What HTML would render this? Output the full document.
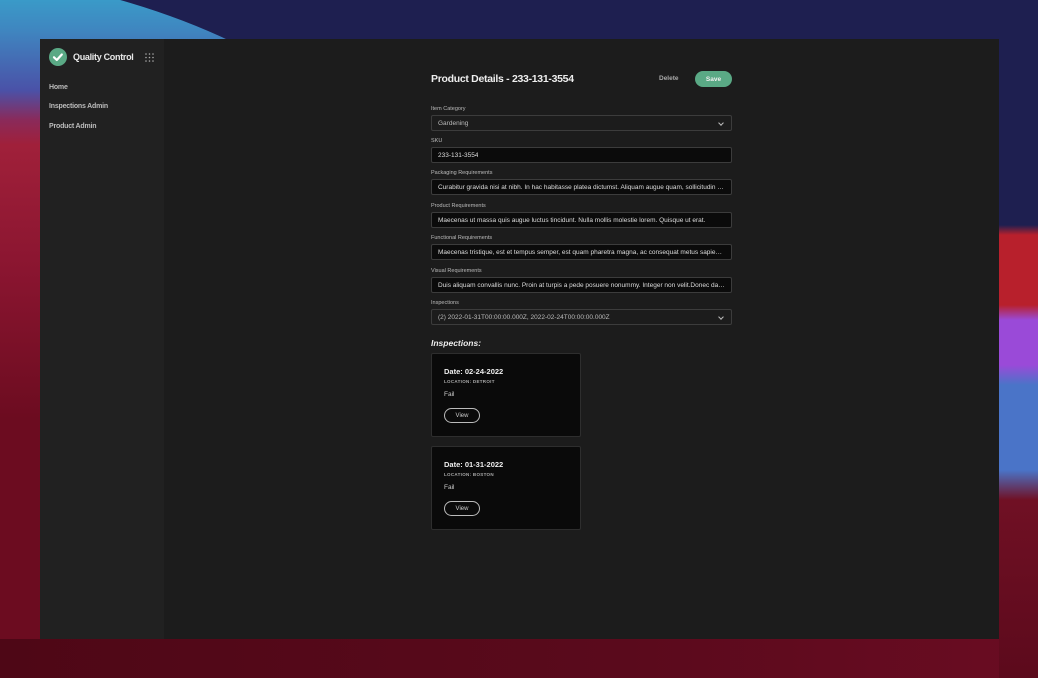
<!DOCTYPE html>
<html><head><meta charset="utf-8"><style>
*{box-sizing:border-box;margin:0;padding:0}
html,body{width:1038px;height:678px;overflow:hidden}
body{position:relative;font-family:"Liberation Sans",sans-serif;background:#1e1f50;}
.bg{position:absolute;inset:0;overflow:hidden}
.bg div{position:absolute}
.win{position:absolute;left:40px;top:39px;width:959px;height:600px;background:#1c1c1c}
.side{position:absolute;left:0;top:0;width:124px;height:600px;background:#212121}
.logo{position:absolute;left:9px;top:9px;width:18px;height:18px;border-radius:50%;background:#5aa985}
.brand{position:absolute;left:33px;top:13px;color:#e8e8e8;font-size:9px;font-weight:bold;letter-spacing:-.3px}
.nav{position:absolute;left:9px;color:#bbb;font-size:7px;font-weight:bold;letter-spacing:-.2px}
.main{position:absolute;left:391px;top:0;width:301px}
h1{position:absolute;top:34px;left:0;color:#eee;font-size:10.5px;font-weight:bold;letter-spacing:-.3px}
.del{position:absolute;left:228px;top:36px;color:#aaa;font-size:6.5px;font-weight:bold}
.save{position:absolute;left:264px;top:32px;width:37px;height:16px;border-radius:8px;background:#5aa985;color:#f0f0f0;font-size:6.5px;font-weight:bold;display:flex;align-items:center;justify-content:center}
.lbl{position:absolute;left:0;color:#bbb;font-size:5.5px}
.inp{position:absolute;left:0;width:301px;height:16px;border:1px solid #3c3c3c;border-radius:2px;background:#0b0b0b;color:#ddd;font-size:6.5px;padding:0 6px;white-space:nowrap;overflow:hidden;display:flex;align-items:center}
.inp span{overflow:hidden;text-overflow:ellipsis;white-space:nowrap}
.sel{background:#1c1c1c;color:#bbb}
.sel:after{content:"";position:absolute;right:8px;top:5px;width:3px;height:3px;border-right:1px solid #bbb;border-bottom:1px solid #bbb;transform:rotate(45deg)}
.ih{position:absolute;left:0;top:299px;color:#eee;font-size:8.5px;font-weight:bold;font-style:italic}
.card{position:absolute;left:0;width:150px;height:84px;background:#0a0a0a;border:1px solid #2e2e2e;border-radius:2px}
.card .d{position:absolute;left:12px;top:13px;color:#eee;font-size:7.5px;font-weight:bold}
.card .l{position:absolute;left:12px;top:25px;color:#aaa;font-size:4.5px;font-weight:bold;letter-spacing:.3px}
.card .f{position:absolute;left:12px;top:37px;color:#ccc;font-size:6.5px}
.card .v{position:absolute;left:12px;top:54px;width:36px;height:15px;border:1px solid #bbb;border-radius:8px;color:#ccc;font-size:6px;display:flex;align-items:center;justify-content:center}
</style></head><body>
<div class="bg">
<div style="left:-700px;top:-30px;width:1200px;height:860px;border-radius:50%;background:linear-gradient(180deg,#3a9ac8 30px,#3f86c0 60px,#4a52a8 120px,#8a2a5a 150px,#a0203a 175px,#8a1530 300px,#6c0c20 450px)"></div>
<div style="left:0;top:639px;width:1038px;height:40px;background:linear-gradient(90deg,#4e0716,#5a0a1c 60%,#6a0c22)"></div>
<div style="left:999px;top:0;width:39px;height:678px;background:linear-gradient(180deg,#1e1f50 0,#1e1f50 225px,#b8202c 235px,#b8202c 305px,#9a4ad8 320px,#9a4ad8 365px,#4a74c8 385px,#4a74c8 470px,#701024 500px,#5c0a1c 678px)"></div>
</div>
<div class="win">
<div class="side">
<div class="logo"><svg width="18" height="18" viewBox="0 0 18 18"><path d="M5 9.3l2.8 2.7 5-5.5" stroke="#fff" stroke-width="2.2" fill="none" stroke-linecap="round" stroke-linejoin="round"/></svg></div>
<div class="brand">Quality Control</div>
<svg style="position:absolute;left:105px;top:14px" width="9" height="9"><g fill="#aaa"><circle cx="1" cy="1" r=".8"/><circle cx="4.5" cy="1" r=".8"/><circle cx="8" cy="1" r=".8"/><circle cx="1" cy="4.5" r=".8"/><circle cx="4.5" cy="4.5" r=".8"/><circle cx="8" cy="4.5" r=".8"/><circle cx="1" cy="8" r=".8"/><circle cx="4.5" cy="8" r=".8"/><circle cx="8" cy="8" r=".8"/></g></svg>
<div class="nav" style="top:45px">Home</div>
<div class="nav" style="top:64px">Inspections Admin</div>
<div class="nav" style="top:84px">Product Admin</div>
</div>
<div class="main">
<h1>Product Details - 233-131-3554</h1>
<div class="del">Delete</div>
<div class="save">Save</div>
<div class="lbl" style="top:67px">Item Category</div>
<div class="inp sel" style="top:76px"><span>Gardening</span></div>
<div class="lbl" style="top:99px">SKU</div>
<div class="inp" style="top:108px"><span>233-131-3554</span></div>
<div class="lbl" style="top:131px">Packaging Requirements</div>
<div class="inp" style="top:140px"><span>Curabitur gravida nisi at nibh. In hac habitasse platea dictumst. Aliquam augue quam, sollicitudin vitae</span></div>
<div class="lbl" style="top:164px">Product Requirements</div>
<div class="inp" style="top:173px"><span>Maecenas ut massa quis augue luctus tincidunt. Nulla mollis molestie lorem. Quisque ut erat.</span></div>
<div class="lbl" style="top:196px">Functional Requirements</div>
<div class="inp" style="top:205px"><span>Maecenas tristique, est et tempus semper, est quam pharetra magna, ac consequat metus sapien ut nunc</span></div>
<div class="lbl" style="top:229px">Visual Requirements</div>
<div class="inp" style="top:238px"><span>Duis aliquam convallis nunc. Proin at turpis a pede posuere nonummy. Integer non velit.Donec dapibus</span></div>
<div class="lbl" style="top:261px">Inspections</div>
<div class="inp sel" style="top:270px"><span>(2) 2022-01-31T00:00:00.000Z, 2022-02-24T00:00:00.000Z</span></div>
<div class="ih">Inspections:</div>
<div class="card" style="top:314px"><div class="d">Date: 02-24-2022</div><div class="l">LOCATION: DETROIT</div><div class="f">Fail</div><div class="v">View</div></div>
<div class="card" style="top:407px"><div class="d">Date: 01-31-2022</div><div class="l">LOCATION: BOSTON</div><div class="f">Fail</div><div class="v">View</div></div>
</div>
</div>
</body></html>
